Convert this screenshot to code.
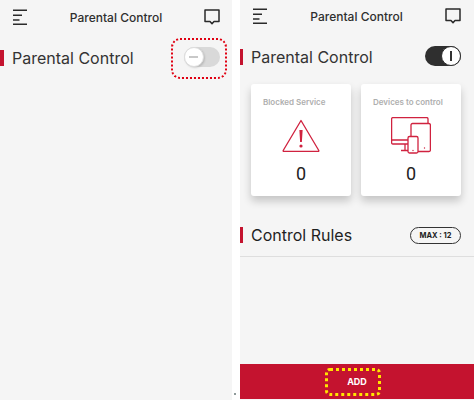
<div class="root">
  <section class="panel left">
    <header class="top">
      <svg class="menu" width="16" height="16" viewBox="0 0 16 16"><path d="M1 1.200H15M1 6.200H10M1 11H7.500M1 15.200H15" /></svg>
      <span class="title">Parental Control</span>
      <svg class="chat" width="16" height="16" viewBox="0 0 16 16"><path d="M1 1H15V12.500H10L8 14.800L6 12.500H1Z" /></svg>
    </header>
    <div class="heading first">
      <span class="mark"></span>
      <h2>Parental Control</h2>
      <div class="spacer"></div>
      <div class="dotbox red-dots">
        <div class="toggle off"><span class="knob"><i></i></span></div>
      </div>
    </div>
  </section>

  <div class="gutter"><span class="speck"></span></div>

  <section class="panel right">
    <header class="top">
      <svg class="menu" width="16" height="16" viewBox="0 0 16 16"><path d="M1 1.200H15M1 6.200H10M1 11H7.500M1 15.200H15" /></svg>
      <span class="title">Parental Control</span>
      <svg class="chat" width="16" height="16" viewBox="0 0 16 16"><path d="M1 1H15V12.500H10L8 14.800L6 12.500H1Z" /></svg>
    </header>
    <div class="heading first">
      <span class="mark"></span>
      <h2>Parental Control</h2>
      <div class="spacer"></div>
      <div class="toggle on"><span class="knob"><i></i></span></div>
    </div>

    <div class="cards">
      <div class="card">
        <div class="label">Blocked Service</div>
        <svg class="icon" width="38" height="34" viewBox="0 0 38 34">
          <path d="M19 1.500L36.800 31.500a.6.6 0 0 1-.5.9H1.700a.6.6 0 0 1-.5-.9Z" />
          <path class="fill" d="M17.400 11h3.200l-.7 12h-1.800Z" />
          <circle class="fill" cx="19" cy="27" r="1.600" />
        </svg>
        <div class="count">0</div>
      </div>
      <div class="card">
        <div class="label">Devices to control</div>
        <svg class="icon devices" width="40" height="38" viewBox="0 0 40 38">
          <path d="M17 27H1.800A1.300 1.300 0 0 1 .6 25.700V1.800A1.300 1.300 0 0 1 1.800 .6H35.700A1.300 1.300 0 0 1 37 1.800V6" />
          <path d="M.6 23H17M14 27V33M10 33.500H17" />
          <rect x="20" y="6.500" width="19.400" height="28" rx="1.500" />
          <rect x="17" y="19.500" width="10" height="16.500" rx="1.500" class="over" />
          <circle class="fill" cx="22" cy="33.500" r=".7" />
          <circle class="fill" cx="33.500" cy="31" r=".7" />
        </svg>
        <div class="count">0</div>
      </div>
    </div>

    <div class="heading rules">
      <span class="mark"></span>
      <h2 class="dark">Control Rules</h2>
      <div class="spacer"></div>
      <div class="pill">MAX : 12</div>
    </div>
    <div class="rule"></div>

    <div class="grow"></div>
    <footer class="add">
      <div class="dotbox yellow-dots"><span>ADD</span></div>
    </footer>
  </section>
</div>

<style>
  :global(body) { margin: 0; background: #fff; }
  .root {
    display: grid;
    grid-template-columns: 232px 8px 234px;
    width: 474px;
    height: 400px;
    font-family: Inter, "Liberation Sans", sans-serif;
    overflow: hidden;
  }
  .panel { background: #f5f5f5; display: flex; flex-direction: column; height: 400px; }
  .gutter { background: #fff; position: relative; }
  .speck { position: absolute; left: 2px; top: 393px; width: 2px; height: 2px; background: #8f9a9a; }
  .top {
    display: flex; align-items: center; justify-content: space-between;
    height: 16px; padding: 9px 12px 0 12px;
  }
  .right .top { padding: 8px 13px 0 12px; }
  .menu path { fill: none; stroke: #2a2a2a; stroke-width: 1.500; }
  .chat path { fill: none; stroke: #2a2a2a; stroke-width: 1.500; stroke-linejoin: round; }
  .title { font-size: 12px; font-weight: 500; color: #2f2f2f; }
  .heading { display: flex; align-items: center; padding-right: 13px; }
  .first { height: 40px; margin-top: 13px; }
  .mark { width: 3px; height: 16px; background: #c4132f; margin-right: 8px; margin-bottom: 1px; flex: none; }
  .left .mark { width: 4px; }
  h2 { margin: 0; font-size: 16px; font-weight: 400; color: #333; white-space: nowrap; }
  h2.dark { color: #1f1f1f; }
  .spacer { flex: 1; }
  .dotbox { display: flex; align-items: center; justify-content: center; box-sizing: border-box; }
  .red-dots {
    width: 56px; height: 41px; border: 2.500px dotted #e00012; border-radius: 9px;
    margin-right: -8px; padding-left: 5px;
  }
  .toggle { width: 36px; height: 20px; border-radius: 10px; position: relative; flex: none; margin-bottom: 2px; }
  .toggle.off { background: #d9d9d9; }
  .toggle.on { background: #2f2f2f; }
  .knob {
    position: absolute; top: 0; width: 20px; height: 20px; border-radius: 50%;
    background: #fff; box-sizing: border-box; border: 1px solid #ddd;
    display: flex; align-items: center; justify-content: center;
  }
  .off .knob { left: 0; box-shadow: 1px 1px 2px rgba(0,0,0,.15); }
  .on .knob { right: 0; border-color: #2f2f2f; }
  .off .knob i { width: 9px; height: 1.500px; background: #c8c8c8; }
  .on .knob i { width: 2px; height: 10px; background: #333; }
  .cards { display: grid; grid-template-columns: 100px 100px; gap: 10px; padding: 7px 0 0 11px; }
  .card {
    height: 112px; background: #fff; border-radius: 3px; box-sizing: border-box;
    box-shadow: 0 5px 8px rgba(0,0,0,.2);
    display: flex; flex-direction: column; align-items: center; padding-top: 13px;
  }
  .label { font-size: 8px; line-height: 10px; font-weight: 600; color: #aeaeae; align-self: flex-start; padding-left: 12px; white-space: nowrap; }
  .icon { margin-top: 12px; flex: none; }
  .devices { margin-top: 10px; }
  .icon path, .icon rect { fill: none; stroke: #d0223f; stroke-width: 1.300; stroke-linejoin: round; }
  .icon .fill, .icon circle { fill: #d0223f; stroke: none; }
  .icon .over { fill: #fff; }
  .count { font-family: Roboto, sans-serif; font-size: 18px; color: #222; margin-top: 11px; line-height: 20px; }
  .devices + .count { margin-top: 9px; }
  .rules { margin-top: 24px; height: 30px; }
  .pill {
    border: 1px solid #333; border-radius: 9px; height: 17px; width: 51px; box-sizing: border-box;
    font-size: 7.500px; font-weight: 700; color: #222;
    display: flex; align-items: center; justify-content: center; white-space: nowrap;
  }
  .rule { height: 1px; background: #dedede; margin-top: 6px; }
  .grow { flex: 1; }
  .add { height: 35px; background: #c4132f; margin-bottom: 1px; display: flex; align-items: center; justify-content: center; }
  .yellow-dots { width: 56px; height: 28px; border: 3px dotted #ffe600; border-radius: 5px; margin-right: 8px; padding-left: 8px; }
  .yellow-dots span { color: #fff; font-size: 9px; font-weight: 700; }
</style>
